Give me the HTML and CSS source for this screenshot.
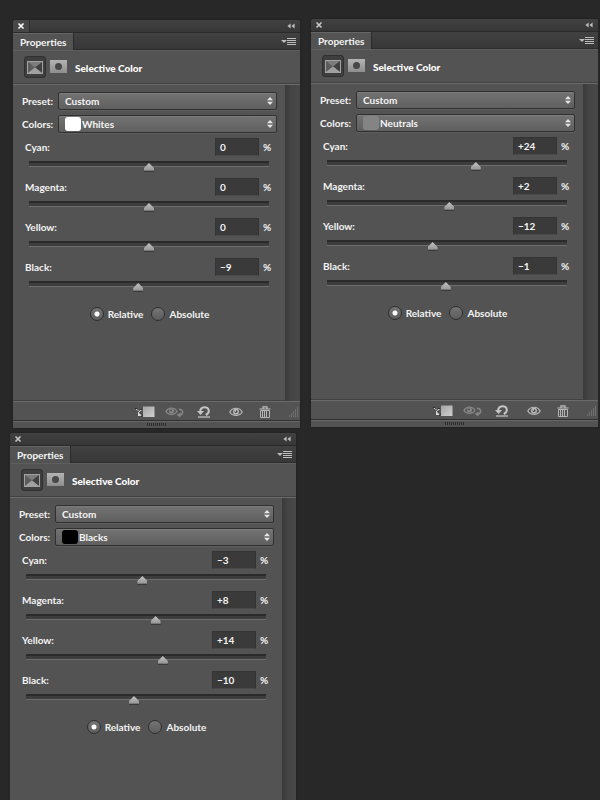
FILE: index.html
```html
<!DOCTYPE html>
<html lang="en">
<head>
<meta charset="utf-8">
<title>Selective Color</title>
<link rel="stylesheet" href="styles.css">
</head>
<body>
<svg class="defs" aria-hidden="true">
  <defs>
    <linearGradient id="g-light" x1="0" y1="0" x2="0" y2="1"><stop offset="0" stop-color="#b4b4b4"/><stop offset="1" stop-color="#8e8e8e"/></linearGradient>
    <linearGradient id="g-square" x1="0" y1="0" x2="1" y2="1"><stop offset="0" stop-color="#a4a4a4"/><stop offset="1" stop-color="#d0d0d0"/></linearGradient>
    <symbol id="i-close" viewBox="0 0 8 8"><path d="M1.5 1.5l5 5M6.5 1.5l-5 5" stroke="currentColor" stroke-width="1.6"/></symbol>
    <symbol id="i-collapse" viewBox="0 0 8 6"><path d="M3.6 0.4v5.2L0.4 3zM7.6 0.4v5.2L4.4 3z" fill="#bcbcbc"/></symbol>
    <symbol id="i-menu" viewBox="0 0 15 8"><path d="M0 2h6L3 5z" fill="#bcbcbc"/><path d="M6 .5h9M6 2.5h9M6 4.5h9M6 6.5h9" stroke="#bcbcbc"/></symbol>
    <symbol id="i-selective" viewBox="0 0 16 13"><path d="M0 0h16v13H0z" fill="#a2a2a2"/><path d="M1 1h14v11H1z" fill="#7c7c7c"/><path d="M1 1l7 5.5L1 12z" fill="#5c5c5c"/><path d="M15 1L8 6.500l7 5.500z" fill="#404040"/><path d="M1 12l7-5.500 7 5.500z" fill="#a0a0a0"/></symbol>
    <symbol id="i-mask" viewBox="0 0 17 13"><path d="M0 0h17v13H0z" fill="url(#g-light)"/><circle cx="8.5" cy="6.5" r="3.5" fill="#484848"/></symbol>
    <symbol id="i-updown" viewBox="0 0 6 8"><path d="M3 0l3 3.2H0zM3 8l3-3.2H0z" fill="#e6e6e6"/></symbol>
    <symbol id="i-clip" viewBox="0 0 20 12"><path d="M8 .5h11.500v10.500H8z" fill="url(#g-square)"/><path d="M1 3.500h1M2.500 4.500h1M3.500 6v4M4 5.500h1M5 4.500h1.500" stroke="#d8d8d8" fill="none"/><path d="M3 6l4 4H3z" fill="#d8d8d8"/><path d="M0 2.500h2M5 3.500h2M6.500 11l1-2.500" stroke="#2a2a2a" fill="none"/></symbol>
    <symbol id="i-previous" viewBox="0 0 19 12"><path d="M1 5.500C3.500 1 9.500 1 12 5.500 9.500 9.500 3.500 9.500 1 5.500z" fill="none" stroke="#858585" stroke-width="1.400"/><circle cx="6.500" cy="5" r="2.500" fill="#858585"/><circle cx="6" cy="4.300" r=".9" fill="#484848"/><path d="M14 3.500c3-.500 4.500 2 3 4.500l-2 1.500" fill="none" stroke="#858585" stroke-width="1.600"/><path d="M11.500 9l4-2.500v5z" fill="#858585"/></symbol>
    <symbol id="i-reset" viewBox="0 0 14 12"><path d="M3.200 5.500C3.200-.2 11.800-.2 11.800 5c0 2-1.300 3.200-3 4" fill="none" stroke="#c6c6c6" stroke-width="2"/><path d="M0 5h7L3.500 9z" fill="#c6c6c6"/><path d="M1 11h12" stroke="#c6c6c6" stroke-width="1.200"/></symbol>
    <symbol id="i-eye" viewBox="0 0 14 10"><path d="M.8 5C3.500 0 10.500 0 13.200 5 10.500 9.600 3.500 9.600.8 5z" fill="#555" stroke="#b8b8b8" stroke-width="1.200"/><circle cx="7" cy="4.700" r="2.900" fill="#c0c0c0"/><circle cx="7" cy="4.600" r="1.500" fill="#444"/><circle cx="6.500" cy="4" r=".7" fill="#eee"/></symbol>
    <symbol id="i-trash" viewBox="0 0 12 12"><path d="M.5 3h11M4 2.500V.8h4v1.700" fill="none" stroke="#c0c0c0" stroke-width="1.200"/><path d="M1.500 4.500h9v7h-9zM3.500 5v6M5.500 5v6M7.500 5v6" fill="none" stroke="#b4b4b4"/></symbol>
    <symbol id="i-resize" viewBox="0 0 10 10"><path d="M8 1h1M6 3h1M8 3h1M4 5h1M6 5h1M8 5h1M2 7h1M4 7h1M6 7h1M8 7h1M0 9h1M2 9h1M4 9h1M6 9h1M8 9h1" stroke="#8c8c8c"/></symbol>
  </defs>
</svg>
<main class="desk" id="desk"></main>
<script src="panels.js"></script>
</body>
</html>
```
FILE: styles.css
```css
* {
  box-sizing: border-box;
}

body {
  margin: 0;
  height: 100vh;
  overflow: hidden;
  background: #282828;
  color: #f4f4f4;
  font: 700 10px/16px Lato, "Noto Sans", sans-serif;
}

.defs {
  display: block;
  width: 0;
  height: 0;
}

svg {
  display: block;
}

button,
input,
select {
  margin: 0;
  padding: 0;
  border: 0;
  color: inherit;
  font: inherit;
}

button {
  background: none;
}

.desk {
  display: grid;
  grid-template-columns: 290fr 287fr;
  gap: 11px;
  align-items: start;
  height: 100vh;
  overflow: hidden;
  padding: 19px 2px 0 10px;
}

.column {
  display: flex;
  flex-direction: column;
  gap: 5px;
}

.panel {
  --scroll: 15px;
  background: #535353;
  border-radius: 3px 3px 0 0;
  box-shadow: 0 0 2px #1c1c1c;
}

.panel-whites {
  margin: 1px 0 0 3px;
}

.panel-blacks {
  --scroll: 14px;
  margin-right: 4px;
}

.titlebar {
  display: flex;
  align-items: center;
  justify-content: space-between;
  height: 13px;
  padding: 0 5px 0 4px;
  border-bottom: 1px solid #2a2a2a;
  border-radius: 3px 3px 0 0;
  background: linear-gradient(#414141, #373737);
  color: #c8c8c8;
}

.panel-whites .titlebar {
  padding-left: 0;
}

.panel-whites .close {
  height: 12px;
  padding: 0 4px;
  border-right: 1px solid #2e2e2e;
  border-radius: 3px 0 0 0;
  background: #474747;
  color: #fff;
}

.tabs {
  display: flex;
  align-items: center;
  justify-content: space-between;
  height: 17px;
  padding-right: 4px;
  background: linear-gradient(#414141, #373737);
  box-shadow: inset 0 -1px #2c2c2c;
}

.tab {
  height: 17px;
  padding: 0 7px;
  border-right: 1px solid #2a2a2a;
  background: #535353;
  box-shadow: inset 0 1px #666;
}

.heading {
  display: flex;
  align-items: center;
  height: 35px;
  padding: 0 11px;
  border-bottom: 1px solid #6c6c6c;
  box-shadow: inset 0 1px #5e5e5e, inset 0 -1px #414141;
}

.heading h2 {
  margin: 2px 0 0 8px;
  font-size: 10px;
  font-weight: 900;
  color: #fff;
}

.kind {
  display: grid;
  place-items: center;
  width: 22px;
  height: 22px;
  margin-right: 4px;
  border: 1px solid #303030;
  border-radius: 3px;
  background: #3e3e3e;
}

.mask {
  margin-bottom: 2px;
}

.body {
  display: flex;
  height: 316px;
}

.settings {
  flex: 1;
  padding: 7px 8px 0 9px;
}

.scrollbar {
  width: var(--scroll);
  background: linear-gradient(90deg, #3a3a3a, #444 40%, #484848);
}

.choice {
  display: flex;
  align-items: center;
  height: 17px;
  margin-bottom: 6px;
}

.choice label {
  width: 36px;
  padding-right: 6px;
  text-align: right;
  white-space: nowrap;
}

.picker {
  flex: 1;
  position: relative;
  height: 18px;
}

.picker select {
  display: block;
  width: 100%;
  height: 18px;
  padding: 0 16px 0 6px;
  border: 1px solid #303030;
  border-radius: 2px;
  background: linear-gradient(#737373, #5f5f5f);
  box-shadow: inset 0 1px #7c7c7c, 0 1px #5e5e5e;
  appearance: none;
}

.picker.swatched select {
  padding-left: 23px;
}

.picker svg {
  position: absolute;
  top: 5px;
  right: 4px;
  pointer-events: none;
}

.swatch {
  position: absolute;
  top: 2px;
  left: 7px;
  width: 16px;
  height: 14px;
  border-radius: 3px;
  pointer-events: none;
}

.swatch-whites {
  background: #fff;
}

.swatch-neutrals {
  background: #848484;
}

.swatch-blacks {
  background: #000;
}

.channel {
  display: grid;
  grid-template-columns: 1fr 44px 17px;
  align-items: center;
  align-content: start;
  row-gap: 4px;
  height: 40px;
  padding: 0 1px 0 3px;
}

.value {
  width: 44px;
  height: 18px;
  padding: 0 4px;
  border: 1px solid #343434;
  border-bottom-color: #4a4a4a;
  background: #3a3a3a;
}

.unit {
  padding-left: 4px;
}

.range {
  grid-column: 1 / -1;
  height: 14px;
  margin: 0 2px 0 -1px;
  appearance: none;
  background:
    linear-gradient(#2a2a2a 0 2px, #3d3d3d 2px 5px, #6e6e6e 5px 6px) center 1px / calc(100% - 10px) 6px no-repeat;
}

.range::-webkit-slider-runnable-track {
  height: 14px;
  padding-top: 3px;
}

.range::-webkit-slider-thumb {
  appearance: none;
  width: 10px;
  height: 9px;
  background: linear-gradient(#c4c4c4, #989898 80%, #3a3a3a 90%);
  clip-path: polygon(50% 0, 100% 55%, 100% 100%, 0 100%, 0 55%);
}

.modes {
  display: flex;
  justify-content: center;
  gap: 8px;
  margin-top: 8px;
}

.modes label {
  display: flex;
  align-items: center;
  gap: 4px;
}

.modes input {
  width: 14px;
  height: 14px;
  border: 1px solid #2e2e2e;
  border-radius: 50%;
  background: linear-gradient(#757575, #5c5c5c);
  appearance: none;
}

.modes input:checked {
  background: radial-gradient(circle, #fff 0 2px, transparent 3px), linear-gradient(#757575, #5c5c5c);
}

.footer {
  display: flex;
  align-items: center;
  justify-content: flex-end;
  height: 19px;
  padding: 1px 1px 0 0;
  border-top: 1px solid #6c6c6c;
  box-shadow: 0 -1px #414141;
}

.footer button {
  margin-right: 13px;
}

.footer button:first-child {
  margin-right: 10px;
}

.footer button:nth-child(3) {
  margin-right: 18px;
}

.footer .eye {
  margin-right: 16px;
}

.footer .trash {
  margin-right: 18px;
}

.grip {
  display: grid;
  place-items: center;
  height: 8px;
  border-top: 1px solid #303030;
  box-shadow: inset 0 1px #666;
}

.grip span {
  width: 20px;
  height: 3px;
  background: repeating-linear-gradient(90deg, #2c2c2c 0 1px, #535353 1px 2px);
}
```
FILE: panels.js
```js
const panels = [
  { tone: "Whites", column: 0, values: ["0", "0", "0", "−9"] },
  { tone: "Neutrals", column: 1, values: ["+24", "+2", "−12", "−1"] },
  { tone: "Blacks", column: 0, values: ["−3", "+8", "+14", "−10"] }
];
const channels = ["Cyan", "Magenta", "Yellow", "Black"];

const icon = (name, w, h) => `<svg width="${w}" height="${h}" aria-hidden="true"><use href="#i-${name}"/></svg>`;
const button = (cls, label, art) => `<button type="button" class="${cls}" aria-label="${label}">${art}</button>`;

function channelRow(name, text, key) {
  const id = `${key}-${name.toLowerCase()}`;
  const amount = Number(text.replace("−", "-"));
  return `<div class="channel">
    <label for="${id}">${name}:</label>
    <input class="value" id="${id}" type="text" value="${text}">
    <span class="unit">%</span>
    <input class="range" type="range" min="-100" max="100" value="${amount}" aria-label="${name}">
  </div>`;
}

function panel({ tone, values }) {
  const key = tone.toLowerCase();
  return `<section class="panel panel-${key}">
    <div class="titlebar">${button("close", "Close", icon("close", 8, 8))}${button("collapse", "Collapse", icon("collapse", 8, 6))}</div>
    <div class="tabs"><button type="button" class="tab">Properties</button>${button("menu", "Panel menu", icon("menu", 15, 8))}</div>
    <header class="heading">
      ${button("kind", "Adjustment", icon("selective", 16, 13))}
      ${button("mask", "Mask", icon("mask", 17, 13))}
      <h2>Selective Color</h2>
    </header>
    <div class="body">
      <div class="settings">
        <div class="choice"><label for="${key}-preset">Preset:</label>
          <div class="picker"><select id="${key}-preset"><option>Custom</option></select>${icon("updown", 6, 8)}</div></div>
        <div class="choice"><label for="${key}-colors">Colors:</label>
          <div class="picker swatched"><select id="${key}-colors"><option>${tone}</option></select><span class="swatch swatch-${key}"></span>${icon("updown", 6, 8)}</div></div>
        ${channels.map((name, i) => channelRow(name, values[i], key)).join("")}
        <div class="modes">
          <label><input type="radio" name="${key}-mode" checked>Relative</label>
          <label><input type="radio" name="${key}-mode">Absolute</label>
        </div>
      </div>
      <div class="scrollbar"></div>
    </div>
    <footer class="footer">
      ${button("clip", "Clip to layer", icon("clip", 20, 12))}
      ${button("previous", "View previous state", icon("previous", 19, 12))}
      ${button("reset", "Reset", icon("reset", 14, 12))}
      ${button("eye", "Toggle visibility", icon("eye", 14, 10))}
      ${button("trash", "Delete", icon("trash", 12, 12))}
      ${icon("resize", 10, 10)}
    </footer>
    <div class="grip"><span></span></div>
  </section>`;
}

document.getElementById("desk").innerHTML = [0, 1]
  .map(n => `<div class="column">${panels.filter(p => p.column === n).map(panel).join("")}</div>`)
  .join("");
```
